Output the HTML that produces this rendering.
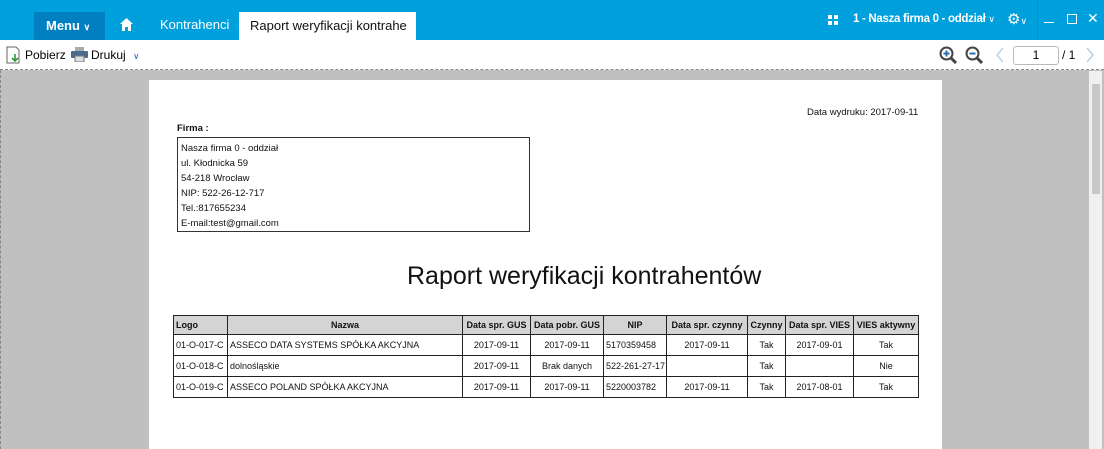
<!DOCTYPE html><html><head><style>
body{margin:0;width:1104px;height:449px;overflow:hidden;font-family:"Liberation Sans",sans-serif;background:#c0c0c0;position:relative}
.a{position:absolute}
.top{left:0;top:0;width:1104px;height:40px;background:#00a0dd;color:#fff;font-size:13px}
.tb{left:0;top:40px;width:1104px;height:29px;background:#fff;border-bottom:1px dashed #888;font-size:12px}
table{border-collapse:collapse;font-size:9px;table-layout:fixed}
td,th{border:1px solid #222;height:20px;padding:0 2px;white-space:nowrap;overflow:hidden}
th{background:#d4d4d4;font-weight:bold;height:18px}
td.c{text-align:center}
</style></head><body>
<div class="a top">
 <div class="a" style="left:34px;top:12px;width:71px;height:28px;background:#0080c0;font-weight:bold;line-height:28px;text-indent:12px">Menu <span style="font-size:9px">&#8744;</span></div>
 <svg class="a" style="left:120px;top:18px" width="13" height="13"><path d="M6.5 0L0 6H2V13H5V9H8V13H11V6H13Z" fill="#fff"/></svg>
 <div class="a" style="left:160px;top:17px">Kontrahenci</div>
 <div class="a" style="left:239px;top:12px;width:177px;height:28px;background:#fff;color:#111;line-height:28px;text-indent:11px;overflow:hidden;white-space:nowrap">Raport weryfikacji kontrahe</div>
 <svg class="a" style="left:828px;top:15px" width="10" height="10" fill="#fff"><rect width="4" height="4"/><rect x="6" width="4" height="4"/><rect y="6" width="4" height="4"/><rect x="6" y="6" width="4" height="4"/></svg>
 <div class="a" style="left:853px;top:13px;font-weight:bold;font-size:11.5px;letter-spacing:-0.3px;white-space:nowrap">1 - Nasza firma 0 - oddział <span style="font-weight:normal;font-size:9px">&#8744;</span></div>
 <div class="a" style="left:1007px;top:10px;font-size:15px">&#9881;<span style="font-size:9px">&#8744;</span></div>
 <div class="a" style="left:1037px;top:0;width:1px;height:40px;background:#0090c8"></div>
 <div class="a" style="left:1044px;top:22px;width:10px;height:1px;background:#fff"></div>
 <div class="a" style="left:1067px;top:14px;width:8px;height:8px;border:1px solid #fff"></div>
 <div class="a" style="left:1087px;top:10px;font-size:14px">✕</div>
</div>
<div class="a tb">
 <svg class="a" style="left:6px;top:6px" width="14" height="18"><path d="M1 1H10L13 4V17H1Z" fill="#fff" stroke="#666"/><path d="M9 8V15M6 12L9 15L12 12" stroke="#2a9a3a" stroke-width="1.6" fill="none"/></svg>
 <div class="a" style="left:25px;top:8px">Pobierz</div>
 <svg class="a" style="left:71px;top:7px" width="17" height="15"><rect x="4" y="0" width="9" height="4" fill="#aaa"/><rect x="0" y="4" width="17" height="7" rx="1" fill="#4b6b8a"/><rect x="4" y="9" width="9" height="6" fill="#ddd" stroke="#777"/></svg>
 <div class="a" style="left:91px;top:8px">Drukuj <span style="color:#36a;font-size:9px;margin-left:4px">&#8744;</span></div>
 <svg class="a" style="left:939px;top:6px" width="18" height="18"><circle cx="7.5" cy="7.5" r="6" fill="none" stroke="#444" stroke-width="2"/><path d="M12 12L17 17" stroke="#444" stroke-width="3"/><path d="M4.5 7.5H10.5M7.5 4.5V10.5" stroke="#2a6fb0" stroke-width="2"/></svg>
 <svg class="a" style="left:965px;top:6px" width="18" height="18"><circle cx="7.5" cy="7.5" r="6" fill="none" stroke="#444" stroke-width="2"/><path d="M12 12L17 17" stroke="#444" stroke-width="3"/><path d="M4.5 7.5H10.5" stroke="#2a6fb0" stroke-width="2"/></svg>
 <svg class="a" style="left:995px;top:7px" width="10" height="16"><path d="M8 1L2 8L8 15" stroke="#b8d0e8" stroke-width="1.5" fill="none"/></svg>
 <div class="a" style="left:1013px;top:6px;width:44px;height:17px;border:1px solid #bbb;border-radius:3px;text-align:center;line-height:17px">1</div>
 <div class="a" style="left:1062px;top:8px">/ 1</div>
 <svg class="a" style="left:1085px;top:7px" width="10" height="16"><path d="M2 1L8 8L2 15" stroke="#b8d0e8" stroke-width="1.5" fill="none"/></svg>
</div>
<div class="a" style="left:0;top:70px;width:1px;height:379px;border-left:1px dashed #888"></div>
<div class="a" style="left:1089px;top:71px;width:13px;height:378px;background:#f0f0f0"></div>
<div class="a" style="left:1092px;top:84px;width:8px;height:110px;background:#c8c8c8"></div>
<div class="a" style="left:149px;top:80px;width:793px;height:369px;background:#fff;font-size:9.5px;color:#111">
 <div class="a" style="left:658px;top:27px">Data wydruku: 2017-09-11</div>
 <div class="a" style="left:28px;top:43px;font-weight:bold">Firma :</div>
 <div class="a" style="left:28px;top:57px;width:353px;height:95px;border:1px solid #333;line-height:15px;padding:3px 0 0 3px;box-sizing:border-box">Nasza firma 0 - oddział<br>ul. Kłodnicka 59<br>54-218 Wrocław<br>NIP: 522-26-12-717<br>Tel.:817655234<br>E-mail:test@gmail.com</div>
 <div class="a" style="left:258px;top:182px;font-size:25px;white-space:nowrap">Raport weryfikacji kontrahentów</div>
 <table class="a" style="left:24px;top:235px;width:745px">
  <colgroup><col style="width:54px"><col style="width:235px"><col style="width:68px"><col style="width:73px"><col style="width:63px"><col style="width:81px"><col style="width:38px"><col style="width:68px"><col style="width:65px"></colgroup>
  <tr><th style="text-align:left">Logo</th><th>Nazwa</th><th>Data spr. GUS</th><th>Data pobr. GUS</th><th>NIP</th><th>Data spr. czynny</th><th>Czynny</th><th>Data spr. VIES</th><th>VIES aktywny</th></tr>
  <tr><td>01-O-017-C</td><td>ASSECO DATA SYSTEMS SPÓŁKA AKCYJNA</td><td class="c">2017-09-11</td><td class="c">2017-09-11</td><td>5170359458</td><td class="c">2017-09-11</td><td class="c">Tak</td><td class="c">2017-09-01</td><td class="c">Tak</td></tr>
  <tr><td>01-O-018-C</td><td>dolnośląskie</td><td class="c">2017-09-11</td><td class="c">Brak danych</td><td>522-261-27-17</td><td></td><td class="c">Tak</td><td></td><td class="c">Nie</td></tr>
  <tr><td>01-O-019-C</td><td>ASSECO POLAND SPÓŁKA AKCYJNA</td><td class="c">2017-09-11</td><td class="c">2017-09-11</td><td>5220003782</td><td class="c">2017-09-11</td><td class="c">Tak</td><td class="c">2017-08-01</td><td class="c">Tak</td></tr>
 </table>
</div>
</body></html>
